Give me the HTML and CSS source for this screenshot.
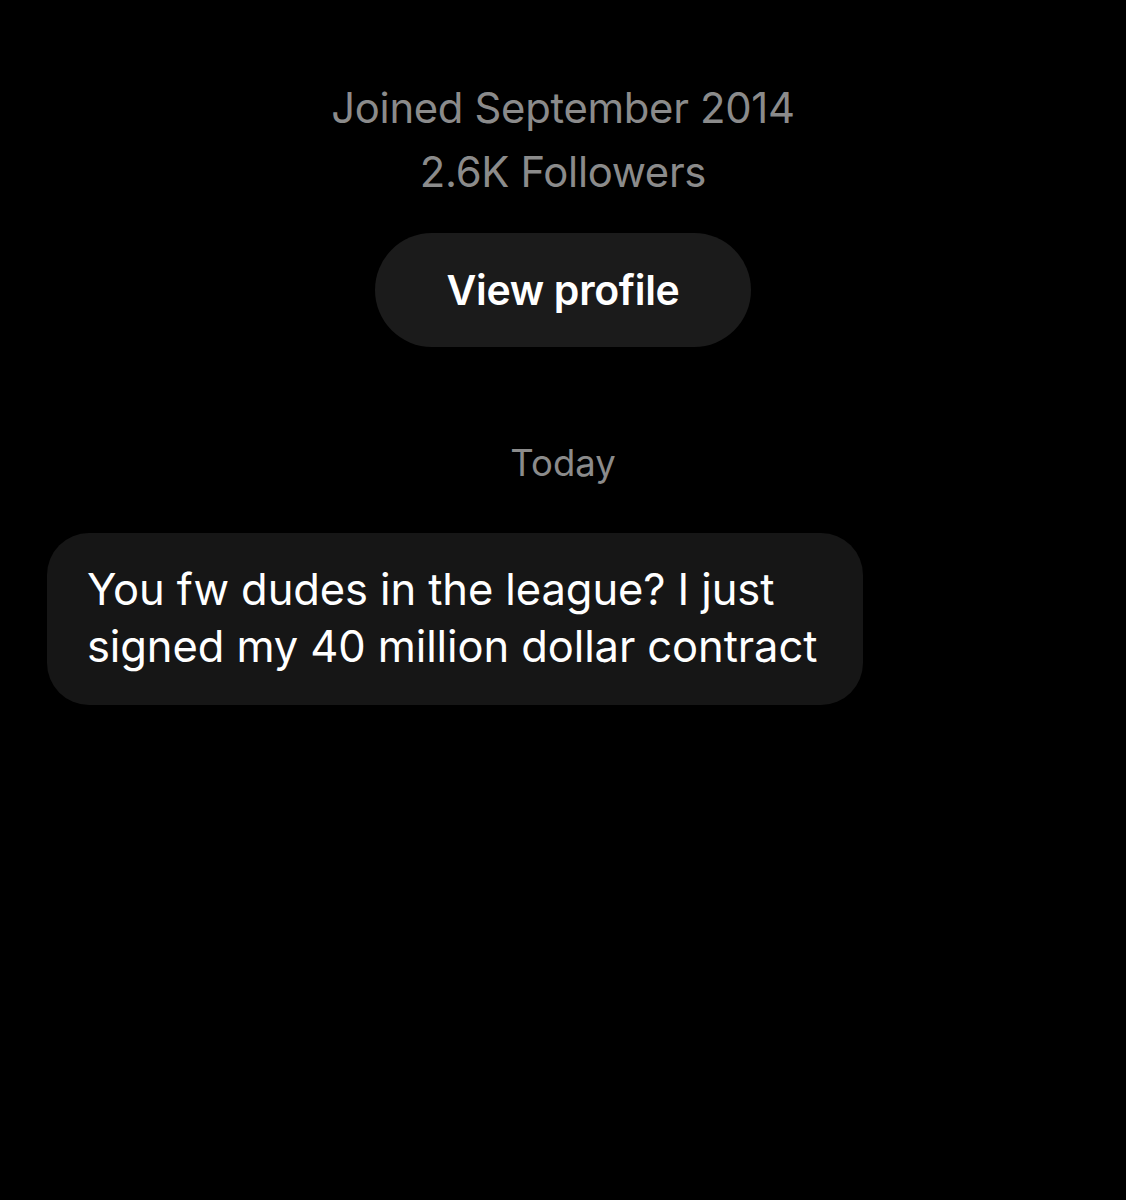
FILE: index.html
```html
<!DOCTYPE html>
<html lang="en">
<head>
<meta charset="utf-8">
<title>Chat</title>
<link rel="stylesheet" href="styles.css">
</head>
<body>
<main class="chat">
  <section class="profile">
    <p class="meta">Joined September 2014</p>
    <p class="meta">2.6K Followers</p>
    <button class="view-btn" type="button">View profile</button>
  </section>
  <div class="day">Today</div>
  <div class="messages">
    <div class="bubble">You fw dudes in the league? I just<br>signed my 40 million dollar contract</div>
  </div>
</main>
</body>
</html>
```

FILE: styles.css
```css
html, body {
  margin: 0;
  padding: 0;
  background: #000;
}
body {
  width: 1126px;
  height: 1200px;
  overflow: hidden;
  font-family: Inter, "Liberation Sans", sans-serif;
  color: #fff;
}
.chat {
  display: flex;
  flex-direction: column;
  padding-top: 76px;
}
.profile {
  display: flex;
  flex-direction: column;
  align-items: center;
}
.meta {
  margin: 0;
  font-size: 41.8px;
  line-height: 64px;
  color: #8b8b8b;
  letter-spacing: -0.3px;
}
.view-btn {
  margin-top: 29px;
  width: 376px;
  height: 114px;
  border: none;
  border-radius: 57px;
  background: #1b1b1b;
  color: #fff;
  font-family: inherit;
  font-size: 41px;
  font-weight: 600;
  letter-spacing: -0.3px;
}
.day {
  margin-top: 92px;
  text-align: center;
  font-size: 36.5px;
  line-height: 48px;
  color: #8b8b8b;
}
.messages {
  margin-top: 46px;
  padding-left: 47px;
  display: flex;
}
.bubble {
  width: 816px;
  box-sizing: border-box;
  padding: 28px 40px 30px;
  background: #161616;
  border-radius: 42px;
  font-size: 43.5px;
  line-height: 57px;
  color: #fff;
  letter-spacing: -0.1px;
}
```
